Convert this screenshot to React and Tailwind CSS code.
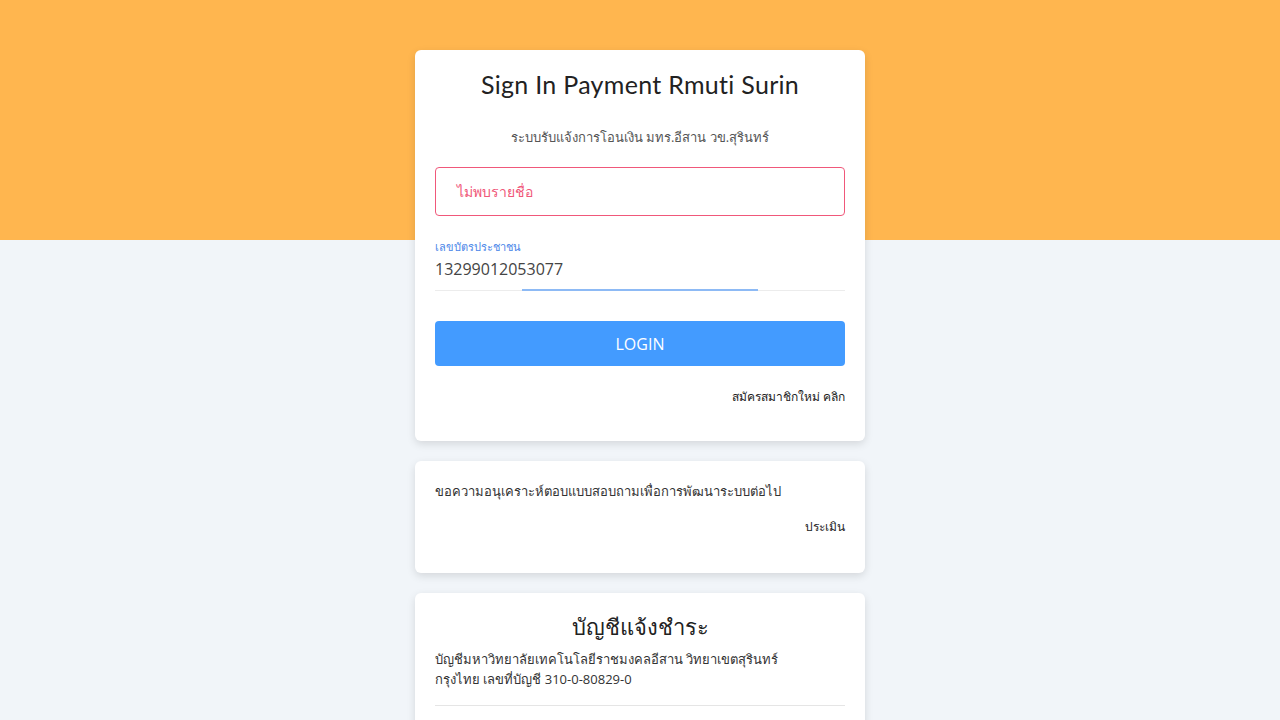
import React from 'react';

const Card = ({ children, className = '' }) => (
  <div className={`bg-white rounded-md shadow-[0_3px_8px_rgba(0,0,0,0.12)] px-5 ${className}`}>
    {children}
  </div>
);

const App = () => {
  return (
    <div className="relative min-h-screen bg-[#f1f5f9] font-['Open_Sans','Noto_Sans',sans-serif] text-[#333]">
      <div className="absolute inset-x-0 top-0 h-[240px] bg-[#ffb64f]" />
      <div className="relative mx-auto w-[450px] pt-[50px] flex flex-col gap-5">
        {/* Sign in */}
        <Card className="pt-[18px] pb-[34px]">
          <h1 className="text-center text-[25px] leading-8 text-[#222] font-['Lato','Noto_Sans',sans-serif] tracking-[0.3px]">
            Sign In Payment Rmuti Surin
          </h1>
          <p className="mt-[27px] text-center text-[13px] leading-5 text-[#555]">
            ระบบรับแจ้งการโอนเงิน มทร.อีสาน วข.สุรินทร์
          </p>
          <div className="mt-[20px] h-[49px] border border-[#f0587a] rounded flex items-center px-[21px] text-[14px] text-[#f0587a]">
            ไม่พบรายชื่อ
          </div>
          <div className="mt-[23px]">
            <label className="block text-[11px] text-[#4a86e8] leading-4">เลขบัตรประชาชน</label>
            <div className="mt-[2px] text-base leading-6 text-[#444]">13299012053077</div>
            <div className="relative mt-[9px] h-px bg-[#ececec]">
              <div className="absolute left-[87px] w-[236px] -top-px h-[2px] bg-[#8dbaf5]" />
            </div>
          </div>
          <button className="mt-[30px] w-full h-[45px] rounded-sm bg-[#439bff] text-white text-base">
            LOGIN
          </button>
          <div className="mt-[21px] text-right text-[12px] leading-5 text-[#222]">สมัครสมาชิกใหม่ คลิก</div>
        </Card>

        {/* Survey */}
        <Card className="pt-[20px] pb-[36px]">
          <p className="text-[13px] leading-5 text-[#333]">ขอความอนุเคราะห์ตอบแบบสอบถามเพื่อการพัฒนาระบบต่อไป</p>
          <div className="mt-[16px] text-right text-[12px] leading-5 text-[#222]">ประเมิน</div>
        </Card>

        {/* Account */}
        <Card className="pt-[17px] pb-[30px]">
          <h2 className="text-center text-[22px] leading-8 text-[#222] font-medium">บัญชีแจ้งชำระ</h2>
          <p className="mt-[7px] text-[13px] leading-5 text-[#333]">
            บัญชีมหาวิทยาลัยเทคโนโลยีราชมงคลอีสาน วิทยาเขตสุรินทร์
            <br />
            กรุงไทย เลขที่บัญชี 310-0-80829-0
          </p>
          <hr className="mt-[16px] border-[#e5e5e5]" />
          <div className="h-[60px]" />
        </Card>
      </div>
    </div>
  );
};

export default App;
